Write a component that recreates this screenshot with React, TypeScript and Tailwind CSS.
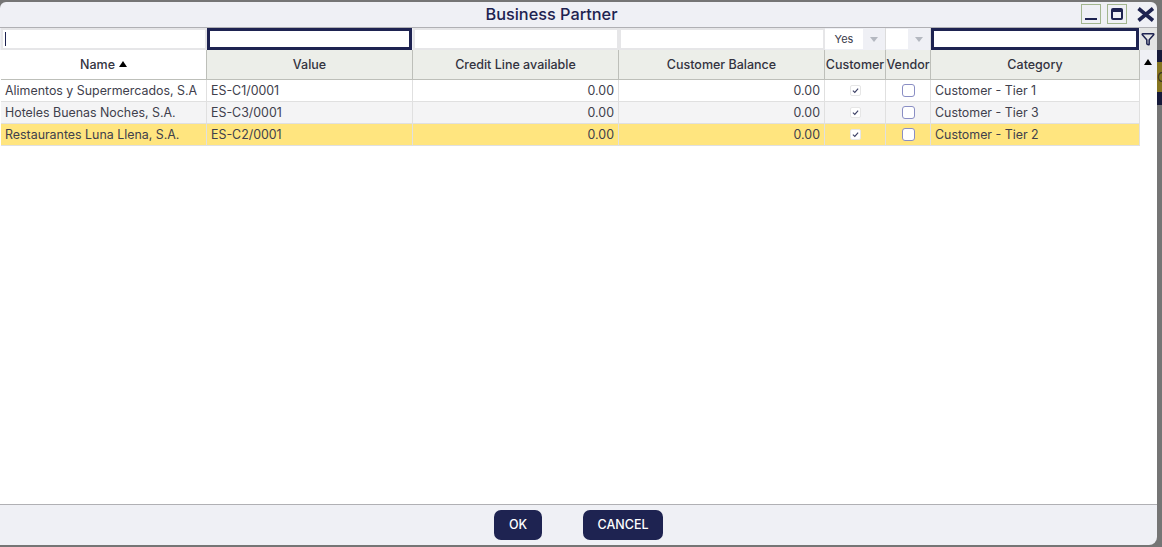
import { Filter } from 'lucide-react';

const GRID = 'grid grid-cols-[206px_206px_206px_206px_61px_45px_209px]';

const rows = [
  { name: 'Alimentos y Supermercados, S.A', value: 'ES-C1/0001', category: 'Customer - Tier 1', bg: 'bg-white' },
  { name: 'Hoteles Buenas Noches, S.A.', value: 'ES-C3/0001', category: 'Customer - Tier 3', bg: 'bg-[#f4f4f5]' },
  { name: 'Restaurantes Luna Llena, S.A.', value: 'ES-C2/0001', category: 'Customer - Tier 2', bg: 'bg-[#ffe57f]' },
];

function FilterInput({ focused, caret }: { focused?: boolean; caret?: boolean }) {
  return (
    <div className={`h-[22px] ${focused ? 'pr-px' : 'bg-[#e6e6e8] py-[2px] pl-[2px] pr-[2px]'}`}>
      <div className={`h-full flex items-center bg-white ${focused ? 'border-[3px] border-[#1e2351]' : ''}`}>
        {caret && <div className="ml-[2px] w-px h-[14px] bg-[#1e2351]" />}
      </div>
    </div>
  );
}

function SelectFilter({ label, field }: { label?: string; field: string }) {
  return (
    <div className="h-[22px] py-[1px] flex border-r border-[#dcdcdc]">
      <div className={`${field} h-full bg-white flex items-center justify-center text-[11px] text-[#3a3a4a]`}>{label}</div>
      <div className="flex-1 flex items-center justify-center">
        <div className="w-0 h-0 border-x-[4px] border-x-transparent border-t-[5px] border-t-[#b4b8c0]" />
      </div>
    </div>
  );
}

function HeaderCell({ children, white }: { children: React.ReactNode; white?: boolean }) {
  return (
    <div className={`h-[30px] pt-px flex items-center justify-center gap-1 border-r border-b border-[#bdbfb9] text-[12.5px] font-medium text-[#33333f] whitespace-nowrap overflow-hidden ${white ? 'bg-white' : 'bg-[#eceee9]'}`}>
      {children}
    </div>
  );
}

function Check({ checked }: { checked: boolean }) {
  if (checked) {
    return (
      <div className="w-[11px] h-[11px] rounded-[2px] bg-white border border-[#e6e6e6] flex items-center justify-center">
        <svg viewBox="0 0 8 8" className="w-[7px] h-[7px]" fill="none" stroke="#3d4166" strokeWidth="1.3">
          <path d="M1 4.2 L3.2 6.2 L7 1.8" />
        </svg>
      </div>
    );
  }
  return <div className="w-[13px] h-[13px] rounded-[3px] bg-white border border-[#8a8ec4]" />;
}

function BodyCell({ children, className = '' }: { children?: React.ReactNode; className?: string }) {
  return (
    <div className={`h-[22px] flex items-center border-r border-b border-[#e0e0e0] text-[#40404c] whitespace-nowrap overflow-hidden ${className}`}>
      {children}
    </div>
  );
}

function TextCell({ children, className = '' }: { children: React.ReactNode; className?: string }) {
  return <BodyCell className={`pt-px text-[12.4px] ${className}`}>{children}</BodyCell>;
}

export default function App() {
  return (
    <div className="w-[1162px] h-[547px] overflow-hidden bg-[#757575] pt-[2px] font-['Inter','Liberation_Sans',sans-serif]">
      <div className="flex h-[543px]">
        <div className="w-[1157px] shrink-0 flex flex-col bg-[#eff0f5] rounded-tl-[6px] rounded-tr-[6px] rounded-br-[8px] overflow-hidden">
          {/* title bar */}
          <div className="h-[25px] shrink-0 flex items-center relative">
            <div className="w-full text-center text-[16.3px] font-medium text-[#1e2351] pr-[54px]">Business Partner</div>
            <div className="absolute right-[2px] top-[2px] flex items-center gap-[6px]">
              <button type="button" className="w-5 h-5 border border-[#a3b68f] flex items-end justify-center pb-[3px]">
                <div className="w-[12px] h-[2px] bg-[#1e2351]" />
              </button>
              <button type="button" className="w-5 h-5 border border-[#a3b68f] flex items-center justify-center">
                <div className="w-[12px] h-[12px] rounded-[2px] border-2 border-t-[4px] border-[#1e2351]" />
              </button>
              <svg viewBox="0 0 20 20" className="w-5 h-5 ml-[2px]" fill="none" stroke="#1e2351" strokeWidth="3.6">
                <path d="M3.5 4.5 L18 16.5 M18 4.5 L3.5 16.5" />
              </svg>
            </div>
          </div>

          {/* grid */}
          <div className="h-[478px] shrink-0 bg-white border-t border-b border-[#b0b0b4]">
            <div className="flex bg-[#eff0f5]">
              <div className={`${GRID} w-[1140px] pl-px`}>
                <FilterInput caret />
                <FilterInput focused />
                <FilterInput />
                <FilterInput />
                <SelectFilter label="Yes" field="w-[38px]" />
                <SelectFilter field="w-[22px]" />
                <FilterInput focused />
              </div>
              <div className="w-[17px] h-[22px] pr-px bg-[#e3e4e3] flex items-center justify-center">
                <Filter className="w-[14px] h-[14px] text-[#1e2351]" strokeWidth={2.6} />
              </div>
            </div>

            <div className="flex">
              <div className={`${GRID} w-[1140px] pl-px`}>
                <HeaderCell white>
                  Name
                  <span className="w-0 h-0 mb-[3px] border-x-[4px] border-x-transparent border-b-[6px] border-b-black" />
                </HeaderCell>
                <HeaderCell>Value</HeaderCell>
                <HeaderCell>Credit Line available</HeaderCell>
                <HeaderCell>Customer Balance</HeaderCell>
                <HeaderCell>Customer</HeaderCell>
                <HeaderCell>Vendor</HeaderCell>
                <HeaderCell>Category</HeaderCell>
              </div>
              <div className="w-[17px] h-[30px] pr-px bg-[#eff0f5] flex items-start justify-center pt-[9px]">
                <span className="w-0 h-0 border-x-[4px] border-x-transparent border-b-[6px] border-b-black" />
              </div>
            </div>

            {rows.map((row) => (
              <div key={row.value} className="pl-px w-[1140px]">
                <div className={`${GRID} ${row.bg}`}>
                  <TextCell className="pl-[4px]">{row.name}</TextCell>
                  <TextCell className="pl-[4px]">{row.value}</TextCell>
                  <TextCell className="justify-end pr-[4px]">0.00</TextCell>
                  <TextCell className="justify-end pr-[4px]">0.00</TextCell>
                  <BodyCell className="justify-center"><Check checked /></BodyCell>
                  <BodyCell className="justify-center"><Check checked={false} /></BodyCell>
                  <TextCell className="pl-[4px]">{row.category}</TextCell>
                </div>
              </div>
            ))}
          </div>

          {/* footer */}
          <div className="flex-1 flex items-center justify-center gap-[41px]">
            <button type="button" className="w-[48px] h-[30px] rounded-[7px] bg-[#1e2351] text-white text-[12.5px] font-medium">OK</button>
            <button type="button" className="w-[80px] h-[30px] rounded-[7px] bg-[#1e2351] text-white text-[12.5px] font-medium">CANCEL</button>
          </div>
        </div>

        {/* dimmed page behind the dialog */}
        <div className="w-[5px] shrink-0 flex flex-col pt-[48px]">
          <div className="h-[12px] bg-[#161a3a]" />
          <div className="h-[30px] bg-[#857520] overflow-hidden flex items-center text-[13px] leading-none text-[#3a3620]">C</div>
          <div className="h-[13px] bg-[#161a3a]" />
        </div>
      </div>
    </div>
  );
}
